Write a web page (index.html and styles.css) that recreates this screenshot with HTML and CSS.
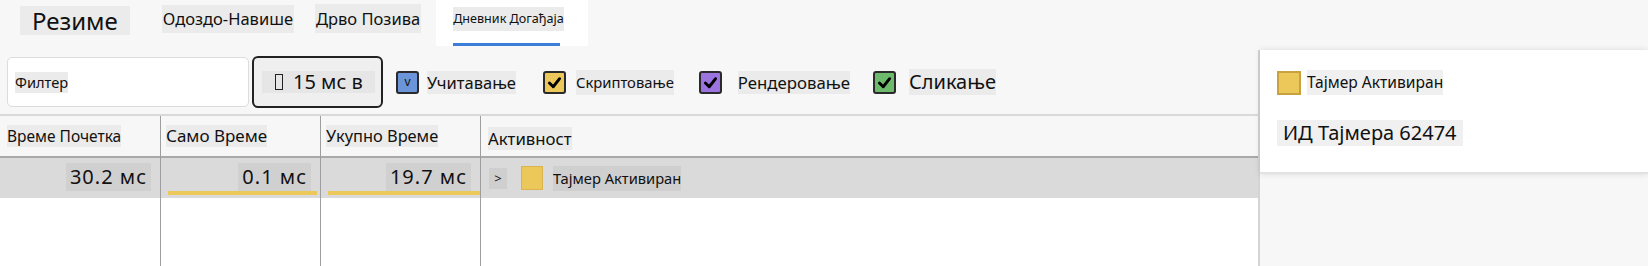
FILE: index.html
```html
<!DOCTYPE html>
<html lang="sr">
<head>
<meta charset="utf-8">
<link rel="stylesheet" href="styles.css">
</head>
<body>
<div class="tabs">
  <div class="tab tab-summary"><span>Резиме</span></div>
  <div class="tab tab-bottom"><span>Одоздо-Навише</span></div>
  <div class="tab tab-tree"><span>Дрво Позива</span></div>
  <div class="tab tab-active"><span>Дневник Догађаја</span><div class="underline"></div></div>
</div>
<div class="main">
  <div class="left">
    <div class="toolbar">
      <div class="filter"><span>Филтер</span></div>
      <div class="btn"><span><i class="tofu"></i>15 мс в</span></div>
      <div class="cb cb-load"><div class="box blue"><span class="v">v</span></div><span class="lbl">Учитавање</span></div>
      <div class="cb cb-script"><div class="box yellow"><svg viewBox="0 0 20 20"><path d="M4 10.5 L8.5 15 L16 5.5" fill="none" stroke="#000" stroke-width="3.4" stroke-linecap="round" stroke-linejoin="round"/></svg></div><span class="lbl">Скриптовање</span></div>
      <div class="cb cb-render"><div class="box purple"><svg viewBox="0 0 20 20"><path d="M4 10.5 L8.5 15 L16 5.5" fill="none" stroke="#000" stroke-width="3.4" stroke-linecap="round" stroke-linejoin="round"/></svg></div><span class="lbl">Рендеровање</span></div>
      <div class="cb cb-paint"><div class="box green"><svg viewBox="0 0 20 20"><path d="M4 10.5 L8.5 15 L16 5.5" fill="none" stroke="#000" stroke-width="3.4" stroke-linecap="round" stroke-linejoin="round"/></svg></div><span class="lbl">Сликање</span></div>
    </div>
    <div class="table">
      <div class="col col1">
        <div class="hcell"><span>Време Почетка</span></div>
        <div class="dcell num"><span>30.2 мс</span></div>
        <div class="fill"></div>
      </div>
      <div class="col col2">
        <div class="hcell"><span>Само Време</span></div>
        <div class="dcell num"><span>0.1 мс</span><div class="bar"></div></div>
        <div class="fill"></div>
      </div>
      <div class="col col3">
        <div class="hcell"><span>Укупно Време</span></div>
        <div class="dcell num"><span>19.7 мс</span><div class="bar"></div></div>
        <div class="fill"></div>
      </div>
      <div class="col col4">
        <div class="hcell"><span>Активност</span></div>
        <div class="dcell act"><span class="arrow">&gt;</span><div class="sq"></div><span class="name">Тајмер Активиран</span></div>
        <div class="fill"></div>
      </div>
    </div>
  </div>
  <div class="side">
    <div class="card">
      <div class="card-title"><div class="csq"></div><span>Тајмер Активиран</span></div>
      <div class="card-id"><span>ИД Тајмера 62474</span></div>
    </div>
  </div>
</div>
</body>
</html>
```
FILE: styles.css
```css
html, body {
  margin: 0;
  padding: 0;
}
body {
  width: 1648px;
  height: 266px;
  overflow: hidden;
  background: #f7f7f7;
  font-family: "Noto Sans", "Open Sans", sans-serif;
  color: #111;
}
.tabs {
  display: flex;
  align-items: flex-start;
  height: 50px;
}
.tab span {
  display: inline-block;
  background: #ebebeb;
  white-space: nowrap;
}
.tab-summary {
  margin: 6px 0 0 20px;
}
.tab-summary span {
  font-size: 24px;
  line-height: 29px;
  padding: 0 12px;
}
.tab-bottom {
  margin: 5px 0 0 32px;
}
.tab-bottom span {
  font-size: 16.5px;
  line-height: 28px;
  padding: 0 1px;
}
.tab-tree {
  margin: 4px 0 0 21px;
}
.tab-tree span {
  font-size: 16.5px;
  line-height: 29px;
  padding: 0 1px;
}
.tab-active {
  margin-left: 15px;
  background: #fff;
  height: 46px;
  padding: 7px 24px 0 17px;
  box-sizing: border-box;
  display: flex;
  flex-direction: column;
  align-items: flex-start;
}
.tab-active span {
  font-size: 12.6px;
  line-height: 24px;
}
.underline {
  margin-top: auto;
  height: 3px;
  width: 107px;
  background: #3b7dd8;
}
.main {
  display: flex;
  height: 216px;
}
.left {
  width: 1258px;
  display: flex;
  flex-direction: column;
}
.toolbar {
  display: flex;
  align-items: center;
  height: 52px;
  margin-top: 6px;
  padding-left: 7px;
}
.filter {
  width: 242px;
  height: 50px;
  box-sizing: border-box;
  background: #fff;
  border: 1px solid #dcdcdc;
  border-radius: 5px;
  display: flex;
  align-items: center;
  padding-left: 7px;
}
.filter span {
  background: #ebebeb;
  font-size: 14.6px;
  line-height: 21px;
}
.btn {
  margin-left: 3px;
  width: 131px;
  height: 52px;
  box-sizing: border-box;
  border: 2px solid #222;
  border-radius: 6px;
  background: #efefef;
  display: flex;
  align-items: center;
  padding-left: 8px;
}
.btn span {
  display: flex;
  align-items: center;
  background: #e6e6e6;
  font-size: 20px;
  line-height: 22px;
  height: 22px;
  padding: 0 12px 0 13px;
  white-space: nowrap;
}
.tofu {
  display: inline-block;
  width: 8px;
  height: 16px;
  box-sizing: border-box;
  border: 1.5px solid #222;
  margin-right: 10px;
}
.cb {
  display: flex;
  align-items: center;
}
.box {
  width: 23px;
  height: 23px;
  box-sizing: border-box;
  border: 2px solid #2a2a2a;
  border-radius: 3px;
  display: flex;
  align-items: center;
  justify-content: center;
}
.box svg {
  width: 17px;
  height: 17px;
}
.box .v {
  font-size: 12px;
  line-height: 12px;
  color: #111;
}
.blue { background: #6b95d8; }
.yellow { background: #ecc85a; }
.purple { background: #9b74e0; }
.green { background: #6dba6d; }
.lbl {
  background: #ebebeb;
  white-space: nowrap;
}
.cb-load { margin-left: 13px; }
.cb-load .lbl { margin-left: 8px; font-size: 16.5px; line-height: 23px; }
.cb-script { margin-left: 27px; }
.cb-script .lbl { margin-left: 10px; font-size: 14.8px; line-height: 25px; }
.cb-render { margin-left: 25px; }
.cb-render .lbl { margin-left: 16px; font-size: 16.8px; line-height: 23px; }
.cb-paint { margin-left: 23px; }
.cb-paint .lbl { margin-left: 13px; font-size: 20px; line-height: 26px; }
.table {
  margin-top: 6px;
  flex: 1;
  display: flex;
  border-top: 2px solid #d9d9d9;
}
.col {
  display: flex;
  flex-direction: column;
  border-right: 1px solid #9e9e9e;
}
.col1 { width: 160px; }
.col2 { width: 159px; }
.col3 { width: 159px; }
.col4 { flex: 1; border-right: none; }
.hcell {
  height: 40px;
  background: #f7f7f7;
  border-bottom: 2px solid #a9a9a9;
  display: flex;
  align-items: center;
  padding-left: 7px;
}
.hcell span {
  background: #ebebeb;
  font-size: 15.5px;
  line-height: 22px;
  white-space: nowrap;
}
.col2 .hcell, .col3 .hcell { padding-left: 5px; }
.col2 .hcell span { font-size: 17px; }
.col3 .hcell span { font-size: 16.4px; }
.col4 .hcell span { font-size: 16.8px; line-height: 23px; margin-top: 4px; }
.dcell {
  height: 40px;
  background: #dadada;
  box-sizing: border-box;
}
.num {
  display: flex;
  flex-direction: column;
  align-items: flex-end;
  padding: 5px 9px 0 0;
}
.num span {
  background: #d0d0d0;
  font-size: 20px;
  letter-spacing: 1px;
  line-height: 28px;
  padding: 0 4px;
  white-space: nowrap;
}
.bar {
  align-self: stretch;
  height: 4px;
  margin-left: 7px;
  background: #ecc85a;
}
.col2 .bar { margin-right: -6px; }
.col3 .bar { margin-right: -9px; }
.act {
  display: flex;
  align-items: center;
  padding-left: 8px;
}
.arrow {
  background: #cfcfcf;
  font-size: 13px;
  line-height: 21px;
  width: 18px;
  text-align: center;
}
.sq {
  margin-left: 14px;
  width: 22px;
  height: 24px;
  box-sizing: border-box;
  background: #ecc85a;
  border: 1px solid #dcb44e;
}
.name {
  margin-left: 10px;
  background: #cfcfcf;
  font-size: 14.7px;
  line-height: 25px;
  white-space: nowrap;
}
.fill {
  flex: 1;
  background: #fff;
}
.side {
  flex: 1;
  border-left: 2px solid #d4d4d4;
  background: #f7f7f7;
}
.card {
  height: 124px;
  box-sizing: border-box;
  background: #fff;
  border-bottom: 2px solid #e2e2e2;
  box-shadow: 0 0 6px rgba(0, 0, 0, 0.12);
  padding: 20px 0 0 17px;
}
.card-title {
  display: flex;
  align-items: center;
}
.csq {
  width: 24px;
  height: 24px;
  box-sizing: border-box;
  background: #ecc85a;
  border: 2px solid #c9a23f;
}
.card-title span {
  margin-left: 6px;
  background: #f0f0f0;
  font-size: 15.6px;
  line-height: 25px;
  white-space: nowrap;
}
.card-id {
  margin-top: 25px;
}
.card-id span {
  display: inline-block;
  background: #f0f0f0;
  font-size: 20px;
  line-height: 26px;
  padding: 0 6px;
  white-space: nowrap;
}
```
